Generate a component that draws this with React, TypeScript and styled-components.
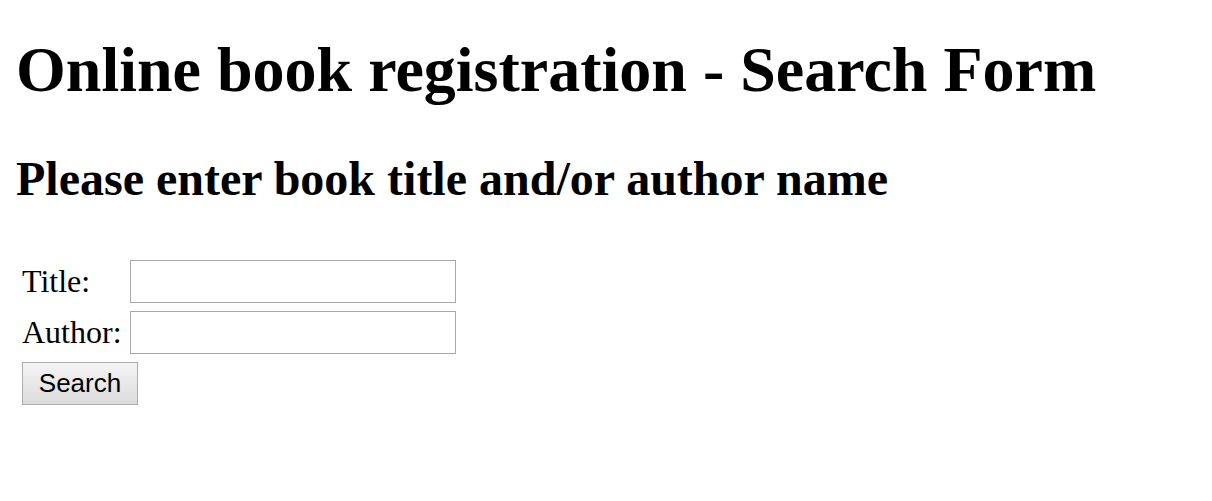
import React from "react";
import styled, { createGlobalStyle } from "styled-components";

const GlobalStyle = createGlobalStyle`
  html, body {
    margin: 0;
    padding: 0;
    background: #fff;
  }
  body {
    font-family: "Liberation Serif", "Times New Roman", serif;
    color: #000;
  }
`;

const Page = styled.div`
  display: flex;
  flex-direction: column;
  padding: 0 0 0 16px;
`;

const Title = styled.h1`
  margin: 38px 0 0;
  font-size: 64px;
  line-height: 1;
  font-weight: bold;
`;

const SubTitle = styled.h2`
  margin: 53px 0 0;
  font-size: 48px;
  line-height: 1;
  font-weight: bold;
`;

const Form = styled.form`
  display: grid;
  grid-template-columns: max-content max-content;
  justify-content: start;
  column-gap: 8px;
  row-gap: 8px;
  align-items: center;
  margin: 57px 0 0 6px;
`;

const Label = styled.label`
  font-size: 32px;
  line-height: 43px;
`;

const Input = styled.input`
  box-sizing: border-box;
  width: 326px;
  height: 43px;
  border: 1px solid #a9a9a9;
  padding: 2px 6px;
  font-size: 26px;
`;

const Button = styled.button`
  grid-column: 1 / span 2;
  justify-self: start;
  box-sizing: border-box;
  width: 116px;
  height: 43px;
  border: 1px solid #adadad;
  border-radius: 0;
  background: linear-gradient(#f4f4f4, #dcdcdc);
  font-family: "Liberation Sans", Arial, sans-serif;
  font-size: 26px;
  color: #000;
  padding: 0;
`;

const App = () => {
  return (
    <>
      <GlobalStyle />
      <Page>
        <Title>Online book registration - Search Form</Title>
        <SubTitle>Please enter book title and/or author name</SubTitle>
        <Form onSubmit={(e) => e.preventDefault()}>
          <Label htmlFor="title">Title:</Label>
          <Input id="title" type="text" />
          <Label htmlFor="author">Author:</Label>
          <Input id="author" type="text" />
          <Button type="submit">Search</Button>
        </Form>
      </Page>
    </>
  );
};

export default App;
